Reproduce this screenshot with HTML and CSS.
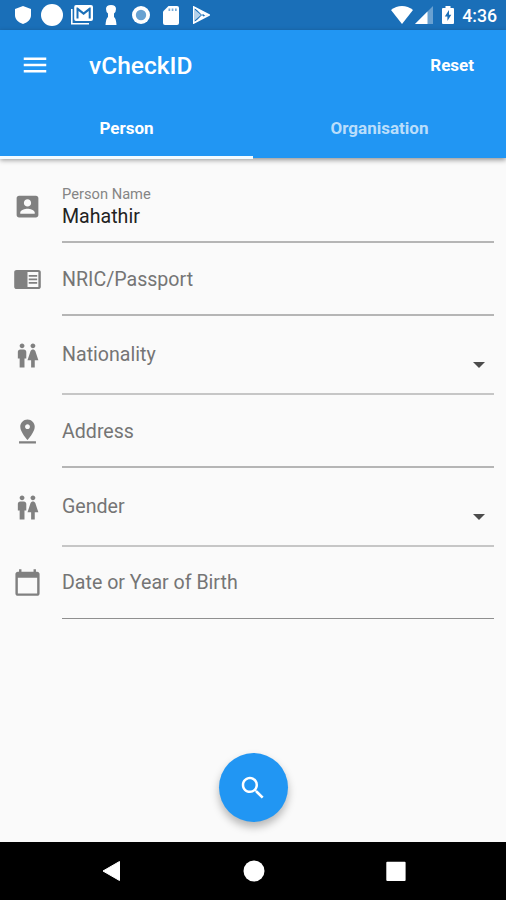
FILE: index.html
```html
<!DOCTYPE html>
<html lang="en">
<head>
<meta charset="utf-8">
<title>vCheckID</title>
<link rel="stylesheet" href="styles.css">
</head>
<body>
<div class="screen">
  <div class="status-bar">
    <div class="notifications">
      <svg width="16" height="18" viewBox="0 0 16 18"><path d="M8 0L16 3V9C16 13 13 16.500 8 18C3 16.500 0 13 0 9V3Z"/></svg>
      <svg width="22" height="22" viewBox="0 0 22 22"><circle cx="11" cy="11" r="11"/></svg>
      <svg width="22" height="20" viewBox="0 0 22 20"><path d="M.8 4V18.800H18" class="line"/><path fill-rule="evenodd" d="M5 0H20Q22 0 22 2V14Q22 16 20 16H5Q3.200 16 3.200 14V2Q3.200 0 5 0ZM5.500 2.500V13.500H7.500V6L12.600 10L17.700 6V13.500H19.700V2.500H18.500L12.600 7.300L6.700 2.500Z"/></svg>
      <svg width="12" height="20" viewBox="0 0 12 20"><path d="M1 4Q1 0 6 0Q11 0 11 4Q11 7 9 8.500V12Q11 13 11.500 20H.5Q1 13 3 12V8.500Q1 7 1 4Z"/></svg>
      <svg width="18" height="18" viewBox="0 0 18 18"><circle cx="9" cy="9" r="9"/><circle cx="9" cy="9" r="5.200" fill="#68a2d2"/></svg>
      <svg width="16" height="19" viewBox="0 0 16 19"><path d="M5.500 0H14Q16 0 16 2V17Q16 19 14 19H2Q0 19 0 17V5.500Z"/><path d="M5.500 2.500V5H7.200V2.500ZM8.700 2.500V5H10.400V2.500ZM12 2.500V5H13.700V2.500Z" fill="#78acd8"/></svg>
      <svg width="17" height="18" viewBox="0 0 17 18"><path d="M.8 1V17L16 9Z" class="line"/><path d="M1 1L10.500 10.500L16 9L11 6ZM1 17L10 8L13 10.500Z"/><path d="M1 3L8 9L1 15Z" fill="#b4d1ea"/></svg>
    </div>
    <div class="system">
      <svg width="22" height="18" viewBox="0 0 22 18"><path d="M11 18L0 4Q5 0 11 0Q17 0 22 4Z"/></svg>
      <svg width="18" height="18" viewBox="0 0 18 18"><path d="M0 18L18 0V18Z" opacity=".35"/><path d="M0 18L12.500 5.500V18Z"/></svg>
      <svg width="12" height="18" viewBox="0 0 12 18"><path d="M3.500 0H8.500V2H11Q12 2 12 3V17Q12 18 11 18H1Q0 18 0 17V3Q0 2 1 2H3.500Z"/><path d="M7 4L2.800 10.500H5.400V15L9.300 8.800H7Z" fill="#1a6fb8"/></svg>
      <span class="clock">4:36</span>
    </div>
  </div>
  <header class="app-bar">
    <div class="toolbar">
      <svg class="menu" width="30" height="30" viewBox="0 0 24 24"><path d="M3 18h18v-2H3v2zm0-5h18v-2H3v2zm0-7v2h18V6H3z"/></svg>
      <h1 class="title">vCheckID</h1>
      <span class="reset">Reset</span>
    </div>
    <div class="tabs">
      <div class="tab active">Person</div>
      <div class="tab">Organisation</div>
    </div>
  </header>
  <main class="form">
    <div class="row first">
      <svg class="icon" viewBox="0 0 24 24"><path d="M3 5v14c0 1.100.89 2 2 2h14c1.100 0 2-.9 2-2V5c0-1.100-.9-2-2-2H5c-1.110 0-2 .9-2 2zm12 4c0 1.660-1.340 3-3 3s-3-1.340-3-3 1.340-3 3-3 3 1.340 3 3zm-9 8c0-2 4-3.100 6-3.100s6 1.100 6 3.100v1H6v-1z"/></svg>
      <div class="field"><span class="caption">Person Name</span><span class="value">Mahathir</span></div>
    </div>
    <div class="row">
      <svg class="icon" viewBox="0 0 24 24"><path d="M21 3H3C1.900 3 1 3.900 1 5v14c0 1.100.9 2 2 2h18c1.100 0 2-.9 2-2V5c0-1.100-.9-2-2-2zm0 16h-9V5h9v14z" transform="translate(0 1.500) scale(1 .875)"/><path d="M13 8.300h7v1.500h-7zM13 11.200h7v1.500h-7zM13 14.100h7v1.500h-7z"/></svg>
      <div class="field"><span class="label">NRIC/Passport</span></div>
    </div>
    <div class="row select">
      <svg class="icon" viewBox="0 0 24 24"><path d="M5.500 22v-7.500H4V9c0-1.100.9-2 2-2h3c1.100 0 2 .9 2 2v5.500H9.500V22h-4zM18 22v-6h3l-2.540-7.630C18.180 7.550 17.420 7 16.560 7h-.12c-.86 0-1.630.55-1.900 1.370L12 16h3v6h3zM7.500 6c1.110 0 2-.89 2-2s-.89-2-2-2-2 .89-2 2 .89 2 2 2zm9 0c1.110 0 2-.89 2-2s-.89-2-2-2-2 .89-2 2 .89 2 2 2z"/></svg>
      <div class="field"><span class="label">Nationality</span><svg class="arrow" width="12" height="6" viewBox="0 0 12 6"><path d="M0 0H12L6 6Z"/></svg></div>
    </div>
    <div class="row">
      <svg class="icon" viewBox="0 0 24 24"><path d="M18 8c0-3.310-2.690-6-6-6S6 4.690 6 8c0 4.500 6 11 6 11s6-6.500 6-11zm-8 0c0-1.100.9-2 2-2s2 .9 2 2-.89 2-2 2c-1.100 0-2-.9-2-2zM5 20v2h14v-2H5z"/></svg>
      <div class="field"><span class="label">Address</span></div>
    </div>
    <div class="row select">
      <svg class="icon" viewBox="0 0 24 24"><path d="M5.500 22v-7.500H4V9c0-1.100.9-2 2-2h3c1.100 0 2 .9 2 2v5.500H9.500V22h-4zM18 22v-6h3l-2.540-7.630C18.180 7.550 17.420 7 16.560 7h-.12c-.86 0-1.630.55-1.900 1.370L12 16h3v6h3zM7.500 6c1.110 0 2-.89 2-2s-.89-2-2-2-2 .89-2 2 .89 2 2 2zm9 0c1.110 0 2-.89 2-2s-.89-2-2-2-2 .89-2 2 .89 2 2 2z"/></svg>
      <div class="field"><span class="label">Gender</span><svg class="arrow" width="12" height="6" viewBox="0 0 12 6"><path d="M0 0H12L6 6Z"/></svg></div>
    </div>
    <div class="row last">
      <svg class="icon" viewBox="0 0 24 24"><path d="M20 3h-1V1h-2v2H7V1H5v2H4c-1.100 0-2 .9-2 2v16c0 1.100.9 2 2 2h16c1.100 0 2-.9 2-2V5c0-1.100-.9-2-2-2zm0 18H4V8h16v13z"/></svg>
      <div class="field"><span class="label">Date or Year of Birth</span></div>
    </div>
  </main>
  <div class="action">
    <div class="fab"><svg width="30" height="30" viewBox="0 0 24 24"><path d="M15.500 14h-.79l-.28-.27C15.410 12.590 16 11.110 16 9.500 16 5.910 13.090 3 9.500 3S3 5.910 3 9.500 5.910 16 9.500 16c1.610 0 3.090-.59 4.230-1.570l.27.28v.79l5 4.990L20.490 19l-4.990-5zm-6 0C7.010 14 5 11.990 5 9.500S7.010 5 9.500 5 14 7.010 14 9.500 11.990 14 9.500 14z"/></svg></div>
  </div>
  <nav class="nav-bar">
    <svg viewBox="0 0 22 22"><path d="M18.500 1.500V20.500L2 11Z" stroke="#fff" stroke-linejoin="round"/></svg>
    <svg viewBox="0 0 22 22"><circle cx="11" cy="11" r="10.500"/></svg>
    <svg viewBox="0 0 22 22"><rect x="1.300" y="1.700" width="19.300" height="19.300" rx="1"/></svg>
  </nav>
</div>
</body>
</html>
```
FILE: styles.css
```css
* { box-sizing: border-box; }
body { margin: 0; font-family: Roboto, sans-serif; }
svg { display: block; flex: none; fill: #fff; }
.screen { width: 506px; height: 900px; display: flex; flex-direction: column; background: #fafafa; overflow: hidden; }

.status-bar { height: 30px; flex: none; background: #1a6fb8; display: flex; justify-content: space-between; padding: 0 9px 0 15px; }
.notifications, .system { display: flex; align-items: center; }
.notifications { gap: 11px; }
.notifications svg:nth-child(2) { margin-left: -1px; }
.notifications svg:nth-child(3) { margin-left: -3px; }
.notifications svg:nth-child(4) { margin-left: 1px; }
.notifications svg:nth-child(5) { margin-left: 4px; }
.notifications svg:nth-child(6) { margin-left: 2px; }
.notifications svg:nth-child(7) { margin-left: 3px; }
.line { fill: none; stroke: #fff; stroke-width: 1.6; }
.system svg:nth-child(2) { margin-left: 2px; }
.system svg:nth-child(3) { margin-left: 9px; }
.clock { margin-left: 8px; color: #fff; font-size: 17.700px; font-weight: 500; line-height: 30px; padding-top: 1px; }

.app-bar { height: 128px; flex: none; background: #2196f3; color: #fff; box-shadow: 0 2px 5px rgba(0, 0, 0, .42); }
.toolbar { height: 70px; display: flex; align-items: center; padding: 0 32px 0 20px; }
.title { margin: 0 auto 0 39px; font-size: 24.500px; font-weight: 500; }
.reset { font-size: 17px; font-weight: 700; }
.tabs { height: 58px; display: grid; grid-template-columns: 1fr 1fr; }
.tab { font-size: 17px; font-weight: 700; text-align: center; line-height: 56px; color: rgba(255, 255, 255, .7); border-bottom: 3px solid transparent; }
.tab.active { color: #fff; border-bottom-color: #f4fbff; }

.form { padding: 0 12px; }
.row { height: 73px; display: flex; align-items: flex-start; }
.row.first { height: 85px; }
.row.select { height: 79px; }
.row.last { height: 72px; }
.icon { width: 29px; height: 29px; margin: 22px 20px 0 1px; fill: #808080; }
.first .icon { margin-top: 34px; }
.select .icon { margin-top: 25px; }
.last .icon { margin-top: 21px; }
.field { flex: 1; height: 100%; display: flex; justify-content: space-between; border-bottom: 2px solid #b5b5b5; }
.select .field { border-color: #c6c6c6; }
.last .field { border-bottom: 1px solid #8f8f8f; }
.label { font-size: 19.600px; line-height: 24px; margin-top: 25px; color: #757575; }
.select .label { margin-top: 27px; }
.last .label { margin-top: 24px; }
.first .field { flex-direction: column; justify-content: flex-start; }
.caption { font-size: 14.700px; line-height: 18px; margin-top: 27px; color: #858585; }
.value { font-size: 19.600px; line-height: 24px; margin-top: 2px; color: #222; }
.arrow { margin: 46px 9px 0 0; fill: #4c4c4c; }

.action { flex: 1; display: flex; justify-content: center; align-items: flex-end; padding-bottom: 20px; }
.fab { width: 69px; height: 69px; border-radius: 50%; background: #2196f3; display: flex; align-items: center; justify-content: center; box-shadow: 0 5px 8px rgba(0, 0, 0, .28); }
.nav-bar { height: 58px; flex: none; background: #000; display: flex; justify-content: space-between; align-items: center; padding: 0 99px 0 101px; }
.nav-bar svg { width: 22px; height: 22px; }
```
